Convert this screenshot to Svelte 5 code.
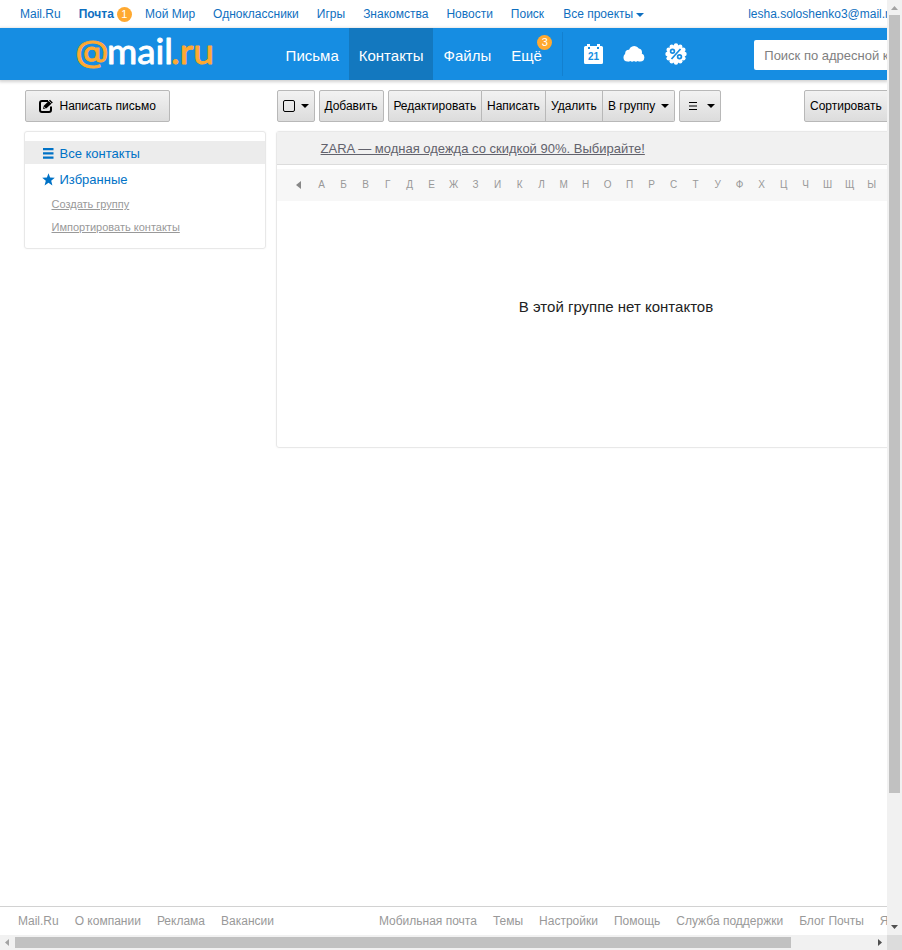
<script>
  const projects = ['Мой Мир', 'Одноклассники', 'Игры', 'Знакомства', 'Новости', 'Поиск'];
  const letters = [...'АБВГДЕЖЗИКЛМНОПРСТУФХЦЧШЩЫ'];
  const company = ['Mail.Ru', 'О компании', 'Реклама', 'Вакансии'];
  const help = ['Мобильная почта', 'Темы', 'Настройки', 'Помощь', 'Служба поддержки', 'Блог Почты', 'Язык'];
  const scallops = Array.from({ length: 12 }, (_, i) => {
    const a = (i * Math.PI) / 6;
    return { x: 11 + 8.5 * Math.cos(a), y: 11 + 8.5 * Math.sin(a) };
  });
</script>

{#snippet caret()}
  <svg class="caret" width="8" height="4" viewBox="0 0 8 4"><path d="M0 0h8L4 4z" fill="currentColor" /></svg>
{/snippet}

<div class="window">
  <div class="page">
    <nav class="top">
      <span>Mail.Ru</span>
      <span class="mail"><b>Почта</b><i class="badge">1</i></span>
      {#each projects as p}<span>{p}</span>{/each}
      <span class="all">Все проекты{@render caret()}</span>
      <span class="account">lesha.soloshenko3@mail.ru</span>
    </nav>

    <header>
      <svg class="logo" width="140" height="44" viewBox="0 0 140 44">
        <text class="at" x="-0.5" y="29.500" textLength="33" lengthAdjust="spacingAndGlyphs">@</text>
        <text class="word" x="31" y="32" textLength="66" lengthAdjust="spacingAndGlyphs">mail</text>
        <text class="word zone" x="95" y="32" textLength="43" lengthAdjust="spacingAndGlyphs">.ru</text>
      </svg>
      <nav class="tabs">
        <span>Письма</span>
        <span class="on">Контакты</span>
        <span>Файлы</span>
        <span class="more">Ещё<i class="badge">3</i></span>
      </nav>
      <div class="services">
        <svg width="19" height="21" viewBox="0 0 19 21">
          <path fill="#fff" d="M1.5 2H3V0h3v2h7V0h3v2h1.500Q19 2 19 3.500v15q0 1.500-1.500 1.500h-16Q0 20 0 18.500v-15Q0 2 1.500 2z" />
          <path fill="#168de2" d="M4 3h2v2H4zM13 3h2v2h-2z" />
          <text x="9.500" y="16" text-anchor="middle" class="day">21</text>
        </svg>
        <svg width="22" height="18" viewBox="0 0 22 18">
          <g fill="#fff">
            <circle cx="11.200" cy="6.300" r="5.300" /><circle cx="15" cy="7.500" r="4" />
            <circle cx="5.800" cy="8.300" r="3.600" /><circle cx="4.500" cy="12.500" r="4" /><circle cx="17.300" cy="12.500" r="4" />
            <path d="M4 8h14v7.500q-1.500 1.300-3.300.6-1.700 1.200-3.700 0-2 1.200-3.700 0-1.700.8-3.300-.4z" />
          </g>
        </svg>
        <svg width="22" height="22" viewBox="0 0 22 22">
          <circle cx="11" cy="11" r="9" fill="#fff" />
          {#each scallops as s}<circle cx={s.x} cy={s.y} r="2.200" fill="#fff" />{/each}
          <g fill="none" stroke="#168de2" stroke-width="1.700"><circle cx="7.500" cy="8.200" r="1.900" /><circle cx="14.500" cy="13.800" r="1.900" /><path d="M15.500 6L6.500 16" /></g>
        </svg>
      </div>
      <div class="search">Поиск по адресной книге</div>
    </header>

    <div class="body">
      <aside>
        <div class="btn compose">
          <svg width="15" height="14" viewBox="0 0 15 14">
            <path fill="none" stroke="#000" stroke-width="2" d="M9 2H3Q1 2 1 4v7q0 2 2 2h7q2 0 2-2V7.500" />
            <path d="M4 10l.8-3.300L11 .8 13.800 3.500 7.500 9.300z" /><path d="M5 8l1.700 1.500M10 2l2.600 2.600" stroke="#e8e8e8" stroke-width=".7" />
          </svg>
          Написать письмо
        </div>
        <div class="card folders">
          <div class="folder on">
            <svg width="13" height="11" viewBox="0 0 13 11"><path fill="#0072c6" d="M1 0h10.500v2.300H1zM1 4.200h10.500v2.300H1zM1 8.400h10.500v2.300H1z" /></svg><span>Все контакты</span>
          </div>
          <div class="folder">
            <svg width="13" height="13" viewBox="0 0 13 13"><path fill="#0072c6" d="M6.500.3l1.600 4.200 4.700.2-3.600 3 1.200 4.800-3.900-2.700-3.900 2.700 1.200-4.800-3.600-3 4.700-.2z" /></svg><span>Избранные</span>
          </div>
          <div class="small">Создать группу</div>
          <div class="small">Импортировать контакты</div>
        </div>
      </aside>

      <main>
        <div class="toolbar">
          <div class="btn check"><i></i>{@render caret()}</div>
          <div class="btn add">Добавить</div>
          <div class="group">
            <div class="btn w1">Редактировать</div>
            <div class="btn w2">Написать</div>
            <div class="btn w3">Удалить</div>
            <div class="btn w4">В группу{@render caret()}</div>
          </div>
          <div class="btn view">
            <svg width="8" height="8" viewBox="0 0 8 8"><path d="M0 0h8v1H0zM0 3.500h8v1H0zM0 7h8v1H0z" /></svg>{@render caret()}
          </div>
          <div class="btn sort">Сортировать{@render caret()}</div>
        </div>
        <div class="card contacts">
          <div class="ad"><span>ZARA — модная одежда со скидкой 90%. Выбирайте!</span></div>
          <div class="alphabet">
            <svg width="5" height="8" viewBox="0 0 5 8"><path d="M5 0v8L0 4z" fill="#888" /></svg>
            {#each letters as l}<span>{l}</span>{/each}
          </div>
          <div class="empty">В этой группе нет контактов</div>
        </div>
      </main>
    </div>

    <footer>
      <div>{#each company as c}<span>{c}</span>{/each}</div>
      <div class="help">{#each help as h}<span>{h}</span>{/each}</div>
    </footer>
  </div>

  <div class="vbar">
    <svg width="15" height="15"><path d="M4 10h7L7.500 6z" fill="#a3a3a3" /></svg>
    <div class="vthumb"></div>
    <svg width="15" height="15"><path d="M4 5h7L7.500 9z" fill="#505050" /></svg>
  </div>
  <div class="hbar">
    <svg width="15" height="15"><path d="M9 4v7L5 7.500z" fill="#a3a3a3" /></svg>
    <div class="hthumb"></div>
    <svg width="15" height="15"><path d="M6 4v7l4-3.500z" fill="#505050" /></svg>
  </div>
  <div class="corner"></div>
</div>

<style>
  :global(body) { margin: 0; background: #fff; overflow: hidden; }
  .window {
    display: grid; grid-template: 935px 15px / 887px 15px; width: 902px; height: 950px;
    font: 12px/14px "Liberation Sans", Arial, sans-serif; color: #000; white-space: nowrap;
  }
  .window :global(svg) { display: block; flex: none; }
  .page { display: flex; flex-direction: column; overflow: hidden; }
  .top { display: flex; align-items: center; gap: 18px; height: 28px; flex: none; padding-left: 20px; color: #0f6fc0; }
  .top span { display: flex; align-items: center; flex: none; }
  .top .caret { margin: 2px 0 0 3px; }
  .top .mail { margin-right: -5px; }
  .top .all { margin-left: 1px; }
  .badge {
    display: block; width: 15px; height: 15px; border-radius: 50%; background: #ffa930; color: #fff;
    font-size: 11px; line-height: 15px; text-align: center; font-style: normal;
  }
  .mail .badge { margin-left: 3px; }
  .account { margin-left: 86px; }

  header { display: flex; height: 52px; flex: none; background: #168de2; box-shadow: 0 1px 3px 1px rgba(0, 0, 0, .18); color: #fff; }
  .logo { margin: 4px 0 0 76px; overflow: visible; }
  .at { font: 30px Inter, sans-serif; fill: #ffa930; stroke: #ffa930; stroke-width: .9px; }
  .word { font: 34px Lato, sans-serif; fill: #fff; stroke: #fff; stroke-width: .9px; stroke-linejoin: round; }
  .zone { fill: #ffa930; stroke: #ffa930; }
  .tabs { display: flex; margin-left: 59.6px; font-size: 15px; line-height: 55px; }
  .tabs span { padding: 0 10px; }
  .tabs .on { background: #1378bf; margin-right: .6px; padding-right: 9.4px; }
  .more { position: relative; }
  .more .badge { position: absolute; left: 36px; top: 7px; }
  .services { display: flex; align-items: center; gap: 20px; margin: 4px 0 4px 10px; padding-left: 21px; border-left: 1px solid #1380cf; }
  .services svg:nth-child(2) { margin-left: .6px; }
  .services svg:nth-child(3) { margin-left: -.4px; }
  .day { font: bold 10px "Liberation Sans", sans-serif; fill: #168de2; }
  .search { margin: 12px 0 10px 67.200px; padding-left: 10px; width: 260px; flex: none; background: #fff; border-radius: 2px; color: #808080; font-size: 13px; line-height: 31px; }

  .body { display: flex; flex: 1; gap: 11px; padding: 10px 0 0 25px; }
  aside { width: 241px; flex: none; }
  main { width: 680px; flex: none; }
  .btn {
    display: flex; align-items: center; box-sizing: border-box; height: 32px; flex: none; padding: 0 5px;
    border: 1px solid #b8b8b8; border-radius: 2px; background: linear-gradient(#f2f2f2, #dcdcdc);
  }
  .compose { width: 145px; padding-left: 13px; gap: 5.5px; }
  .compose svg { margin-top: -1px; }
  .card { box-sizing: border-box; border: 1px solid #e8e8e8; border-radius: 3px; box-shadow: 0 0 2px rgba(0, 0, 0, .06); }
  .folders { margin: 9px 0 0 -1px; width: 242px; height: 118px; padding-top: 9px; }
  .folder { display: flex; align-items: center; height: 23px; margin-bottom: 3px; padding-left: 17px; gap: 4.5px; font-size: 13px; color: #0072c6; line-height: 15px; }
  .folder svg { margin-top: 1px; }
  .folder span { padding-top: 2px; }
  .folder.on { background: #ececec; }
  .small { padding-left: 26.5px; height: 23px; line-height: 22px; font-size: 11px; color: #999; text-decoration: underline; }

  .toolbar { display: flex; gap: 4px; }
  .check { width: 38px; justify-content: space-between; }
  .check i { width: 10px; height: 10px; border: 1px solid #000; border-radius: 2px; }
  .add { width: 65px; padding-left: 4.4px; }
  .group { display: flex; }
  .group .btn:not(:first-child) { border-left: 0; border-top-left-radius: 0; border-bottom-left-radius: 0; }
  .group .btn:not(:last-child) { border-top-right-radius: 0; border-bottom-right-radius: 0; }
  .w1 { width: 94px; padding-left: 4.4px; }
  .w2 { width: 64px; }
  .w3 { width: 57px; }
  .w4 { width: 72px; justify-content: space-between; }
  .view { width: 42px; padding-left: 9px; justify-content: space-between; }
  .sort { margin-left: 79px; gap: 6px; }
  .contacts { margin: 9px 0 0 -1px; height: 317px; }
  .ad { height: 32px; padding-left: 43.6px; background: #f1f1f1; border-bottom: 1px solid #dcdcdc; font-size: 13px; line-height: 33px; color: #62626c; text-decoration: underline; }
  .alphabet { display: flex; align-items: center; height: 32px; margin-top: 4px; padding-left: 19px; background: #f7f7f7; font-size: 10px; color: #999; }
  .alphabet svg { margin-right: 9.6px; }
  .alphabet span { width: 22px; text-align: center; }
  .empty { margin: 97px 1px 0 0; font-size: 15px; line-height: 18px; text-align: center; color: #222; }

  footer { display: flex; height: 28px; flex: none; border-top: 1px solid #d2d2d2; padding-left: 18px; color: #999; line-height: 29px; }
  footer div { display: flex; gap: 16px; flex: none; }
  .help { margin-left: 105px; }

  .vbar { display: flex; flex-direction: column; background: #f1f1f1; }
  .vthumb { width: 11px; height: 778px; margin: 0 2px auto; background: #c1c1c1; }
  .hbar { display: flex; background: #f1f1f1; }
  .hthumb { width: 776px; height: 11px; margin: 2px auto 2px 0; background: #c1c1c1; }
  .corner { background: #dcdcdc; }
</style>
